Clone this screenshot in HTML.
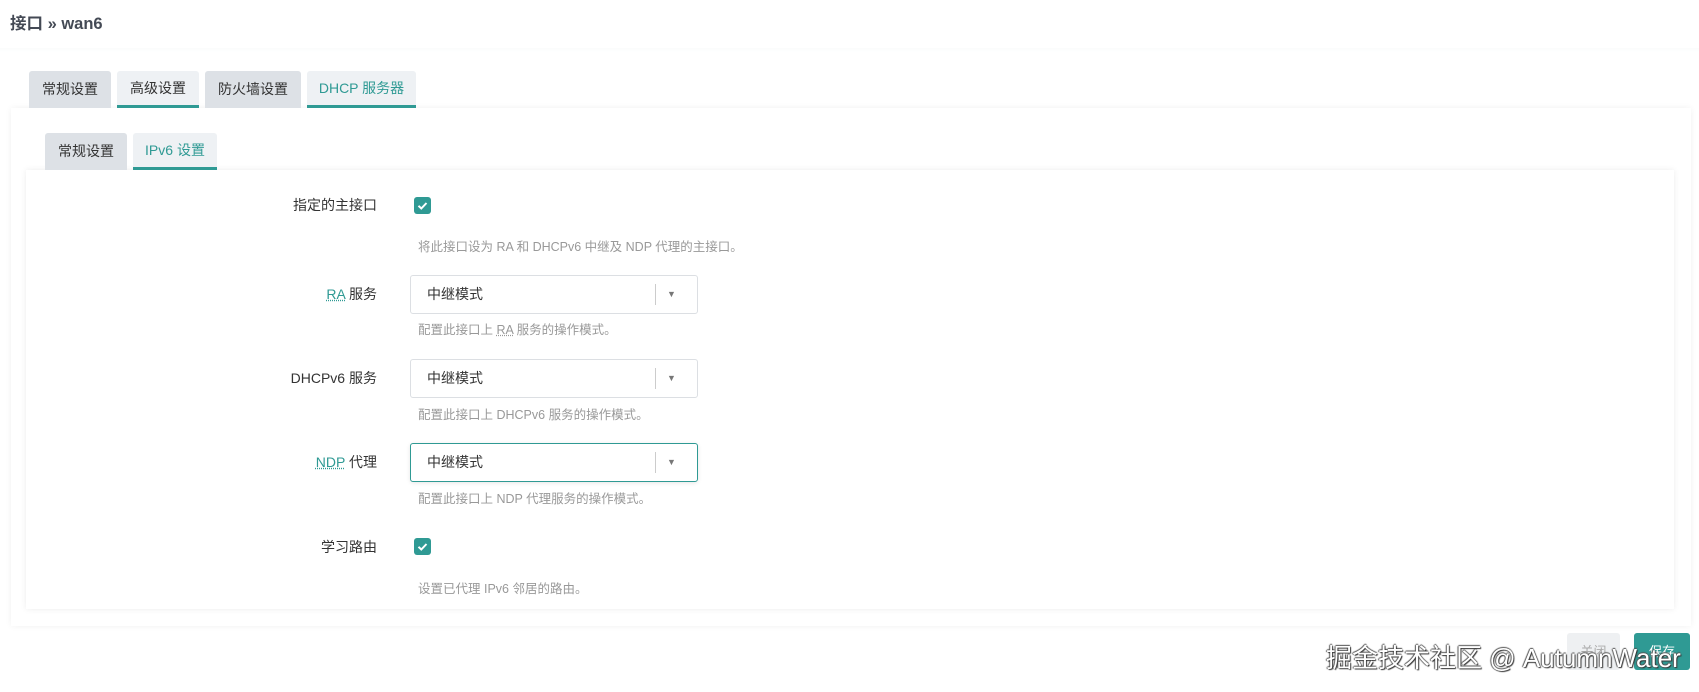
<!DOCTYPE html>
<html><head><meta charset="utf-8"><style>
*{box-sizing:border-box;margin:0;padding:0}
body{width:1699px;height:692px;overflow:hidden;background:#fff;font-family:"Liberation Sans","Noto Sans CJK SC",sans-serif;color:#333;position:relative}
.abs{position:absolute}
.title{left:10px;top:10px;font-size:16.5px;font-weight:bold;color:#444a55}
.hdrline{left:0;top:48px;width:1699px;height:4px;background:linear-gradient(#fafbfb,#fff)}
.tab{position:absolute;height:37px;background:#dde1e6;border-radius:3px 3px 0 0;font-size:14px;color:#333;text-align:center;line-height:37px}
.tab.u{border-bottom:3px solid #2f9a94;line-height:35px}
.tab.lt{background:#eef1f4}
.tab.act{background:#eef1f4;color:#2f9a94}
.outer{left:11px;top:108px;width:1680px;height:518px;background:#fff;box-shadow:0 0 6px rgba(0,0,0,.06)}
.inner{left:26px;top:170px;width:1648px;height:439px;background:#fff;box-shadow:0 0 6px rgba(0,0,0,.08)}
.lbl{position:absolute;right:1322px;font-size:14px;color:#333;text-align:right;white-space:nowrap}
.lbl u{text-decoration:underline dotted;color:#2f9a94}
.help{position:absolute;left:418px;font-size:12.5px;color:#999;white-space:nowrap}
.help u{text-decoration:underline dotted}
.cb{position:absolute;left:414px;width:17px;height:17px;background:#2f9a94;border-radius:3px}
.sel{position:absolute;left:410px;width:288px;height:39px;border:1px solid #dcdfe3;border-radius:3px;background:#fff;font-size:14px;color:#333;line-height:37px;padding-left:16px}
.sel:after{content:"";position:absolute;left:244px;top:8px;width:1px;height:21px;background:#ccc}
.sel i{position:absolute;left:256px;top:0;font-style:normal;font-size:9px;color:#777}
.btn{position:absolute;top:633px;height:37px;border-radius:3px;font-size:13px;text-align:center;line-height:37px}
</style></head><body>
<div class="abs title">接口 » wan6</div>
<div class="abs hdrline"></div>
<div class="abs outer"></div>
<div class="tab" style="left:29px;top:71px;width:82px">常规设置</div>
<div class="tab u lt" style="left:117px;top:71px;width:82px">高级设置</div>
<div class="tab" style="left:205px;top:71px;width:96px">防火墙设置</div>
<div class="tab u act" style="left:307px;top:71px;width:109px">DHCP 服务器</div>
<div class="abs inner"></div>
<div class="tab" style="left:45px;top:133px;width:82px">常规设置</div>
<div class="tab u act" style="left:133px;top:133px;width:84px">IPv6 设置</div>

<div class="lbl" style="top:195px">指定的主接口</div>
<div class="cb" style="top:197px"><svg width="17" height="17"><path d="M4.5 8.8l2.8 2.7 5.2-5.5" stroke="#fff" stroke-width="2" fill="none"/></svg></div>
<div class="help" style="top:236px">将此接口设为 RA 和 DHCPv6 中继及 NDP 代理的主接口。</div>

<div class="lbl" style="top:284px"><u>RA</u> 服务</div>
<div class="sel" style="top:275px">中继模式<i>▼</i></div>
<div class="help" style="top:319px">配置此接口上 <u>RA</u> 服务的操作模式。</div>

<div class="lbl" style="top:368px">DHCPv6 服务</div>
<div class="sel" style="top:359px">中继模式<i>▼</i></div>
<div class="help" style="top:404px">配置此接口上 DHCPv6 服务的操作模式。</div>

<div class="lbl" style="top:452px"><u>NDP</u> 代理</div>
<div class="sel" style="top:443px;border-color:#2f9a94;box-shadow:0 1px 4px rgba(0,0,0,.1)">中继模式<i>▼</i></div>
<div class="help" style="top:488px">配置此接口上 NDP 代理服务的操作模式。</div>

<div class="lbl" style="top:537px">学习路由</div>
<div class="cb" style="top:538px"><svg width="17" height="17"><path d="M4.5 8.8l2.8 2.7 5.2-5.5" stroke="#fff" stroke-width="2" fill="none"/></svg></div>
<div class="help" style="top:578px">设置已代理 IPv6 邻居的路由。</div>

<div class="btn" style="left:1567px;width:53px;background:#eef0f2;color:#aaa">关闭</div>
<div class="btn" style="left:1634px;width:56px;background:#2f9a94;color:#fff">保存</div>
<div class="abs" style="left:1326px;top:638px;font-size:26px;color:#fff;white-space:nowrap;text-shadow:1px 1px 1px #333,-1px 0 1px #555,0 -1px 1px #555">掘金技术社区 @ AutumnWater</div>
</body></html>
